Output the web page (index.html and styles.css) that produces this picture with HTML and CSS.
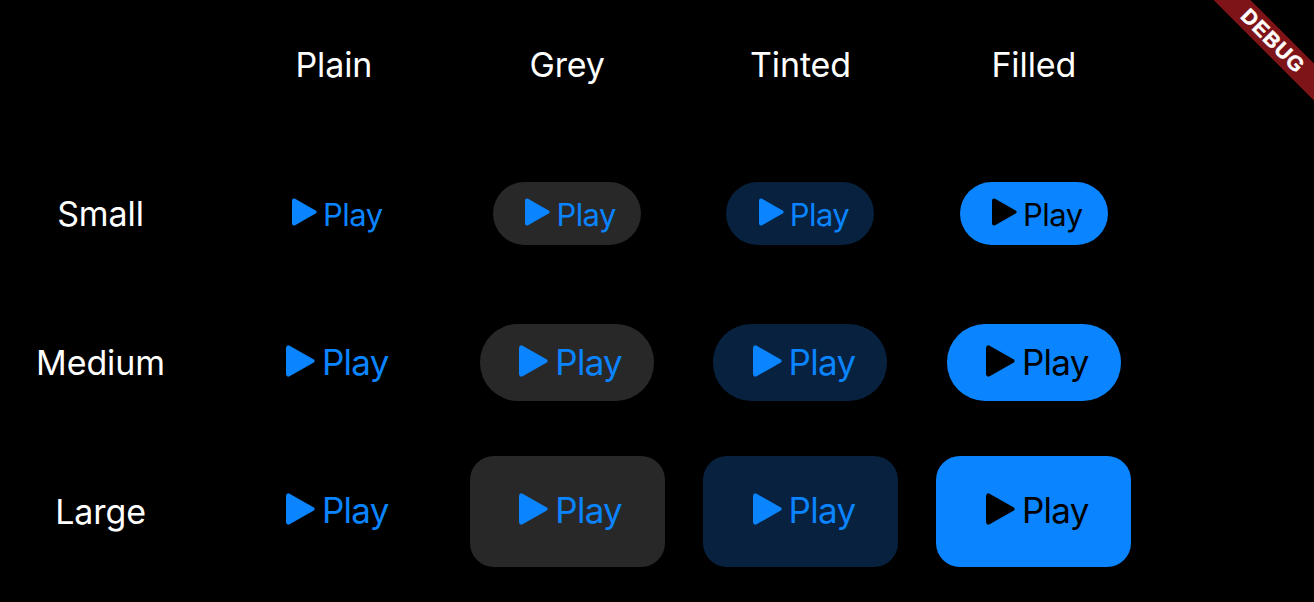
FILE: index.html
```html
<!DOCTYPE html>
<html lang="en">

<head>
    <meta charset="UTF-8">
    <title>Buttons</title>
    <link rel="stylesheet" href="styles.css">
</head>

<body>
    <svg class="defs" width="0" height="0">
        <symbol id="play" viewBox="0 0 29 32">
            <path d="M3.6 0.7 L27.4 14.2 Q30 16 27.4 17.8 L3.6 31.3 Q0.4 32.6 0 29 L0 3 Q0.4 -0.6 3.6 0.7 Z" />
        </symbol>
    </svg>

    <div class="banner">DEBUG</div>

    <main class="table">
        <div class="cell"></div>
        <div class="cell label">Plain</div>
        <div class="cell label">Grey</div>
        <div class="cell label">Tinted</div>
        <div class="cell label">Filled</div>

        <div class="cell label">Small</div>
        <div class="cell"><button class="btn small plain"><svg class="icon"><use href="#play" /></svg>Play</button></div>
        <div class="cell"><button class="btn small grey"><svg class="icon"><use href="#play" /></svg>Play</button></div>
        <div class="cell"><button class="btn small tinted"><svg class="icon"><use href="#play" /></svg>Play</button></div>
        <div class="cell"><button class="btn small filled"><svg class="icon"><use href="#play" /></svg>Play</button></div>

        <div class="cell label">Medium</div>
        <div class="cell"><button class="btn medium plain"><svg class="icon"><use href="#play" /></svg>Play</button></div>
        <div class="cell"><button class="btn medium grey"><svg class="icon"><use href="#play" /></svg>Play</button></div>
        <div class="cell"><button class="btn medium tinted"><svg class="icon"><use href="#play" /></svg>Play</button></div>
        <div class="cell"><button class="btn medium filled"><svg class="icon"><use href="#play" /></svg>Play</button></div>

        <div class="cell label">Large</div>
        <div class="cell"><button class="btn large plain"><svg class="icon"><use href="#play" /></svg>Play</button></div>
        <div class="cell"><button class="btn large grey"><svg class="icon"><use href="#play" /></svg>Play</button></div>
        <div class="cell"><button class="btn large tinted"><svg class="icon"><use href="#play" /></svg>Play</button></div>
        <div class="cell"><button class="btn large filled"><svg class="icon"><use href="#play" /></svg>Play</button></div>
    </main>
</body>

</html>
```

FILE: styles.css
```css
html, body {
    height: 100%;
}

body {
    margin: 0;
    background: #000;
    color: #fff;
    font-family: Inter, "Liberation Sans", sans-serif;
    overflow: hidden;
}

.defs {
    position: absolute;
}

.table {
    display: grid;
    grid-template-columns: repeat(5, 200px);
    grid-auto-rows: 112px;
    column-gap: 33.33px;
    row-gap: 37px;
    padding-top: 8.5px;
    padding-left: 0.5px;
}

.cell {
    display: flex;
    align-items: center;
    justify-content: center;
}

.label {
    font-size: 34px;
    letter-spacing: -0.1px;
}

.btn {
    display: flex;
    align-items: center;
    justify-content: center;
    border: none;
    padding: 0 0 0 7px;
    color: #0a84ff;
    background: transparent;
    font-family: inherit;
}

.icon {
    fill: currentColor;
}

.small {
    width: 148px;
    height: 63px;
    border-radius: 32px;
    font-size: 31px;
    letter-spacing: -0.55px;
    gap: 6px;
    padding-top: 2px;
}

.small .icon {
    width: 25px;
    height: 28px;
    margin-top: -5px;
}

.medium {
    width: 174px;
    height: 77px;
    border-radius: 38px;
    font-size: 35px;
    letter-spacing: -0.7px;
    gap: 7px;
    padding-bottom: 2px;
}

.medium .icon {
    width: 29px;
    height: 32px;
    margin-top: -2px;
}

.large {
    width: 195px;
    height: 111px;
    border-radius: 24px;
    font-size: 35px;
    letter-spacing: -0.7px;
    gap: 7px;
    padding-bottom: 3px;
}

.large .icon {
    width: 29px;
    height: 32px;
    margin-top: -2px;
}

.grey {
    background: #282829;
}

.tinted {
    background: #07213f;
}

.filled {
    background: #0a84ff;
    color: #000;
}

/* corner ribbon */
.banner {
    position: absolute;
    top: 28px;
    left: 1173px;
    width: 200px;
    height: 26px;
    line-height: 26px;
    transform: rotate(45deg);
    background: #7f1418;
    color: #fff;
    font-family: "Liberation Sans", sans-serif;
    font-size: 21px;
    font-weight: 700;
    letter-spacing: 1px;
    text-align: center;
    -webkit-text-stroke: 0.5px #fff;
}
```
